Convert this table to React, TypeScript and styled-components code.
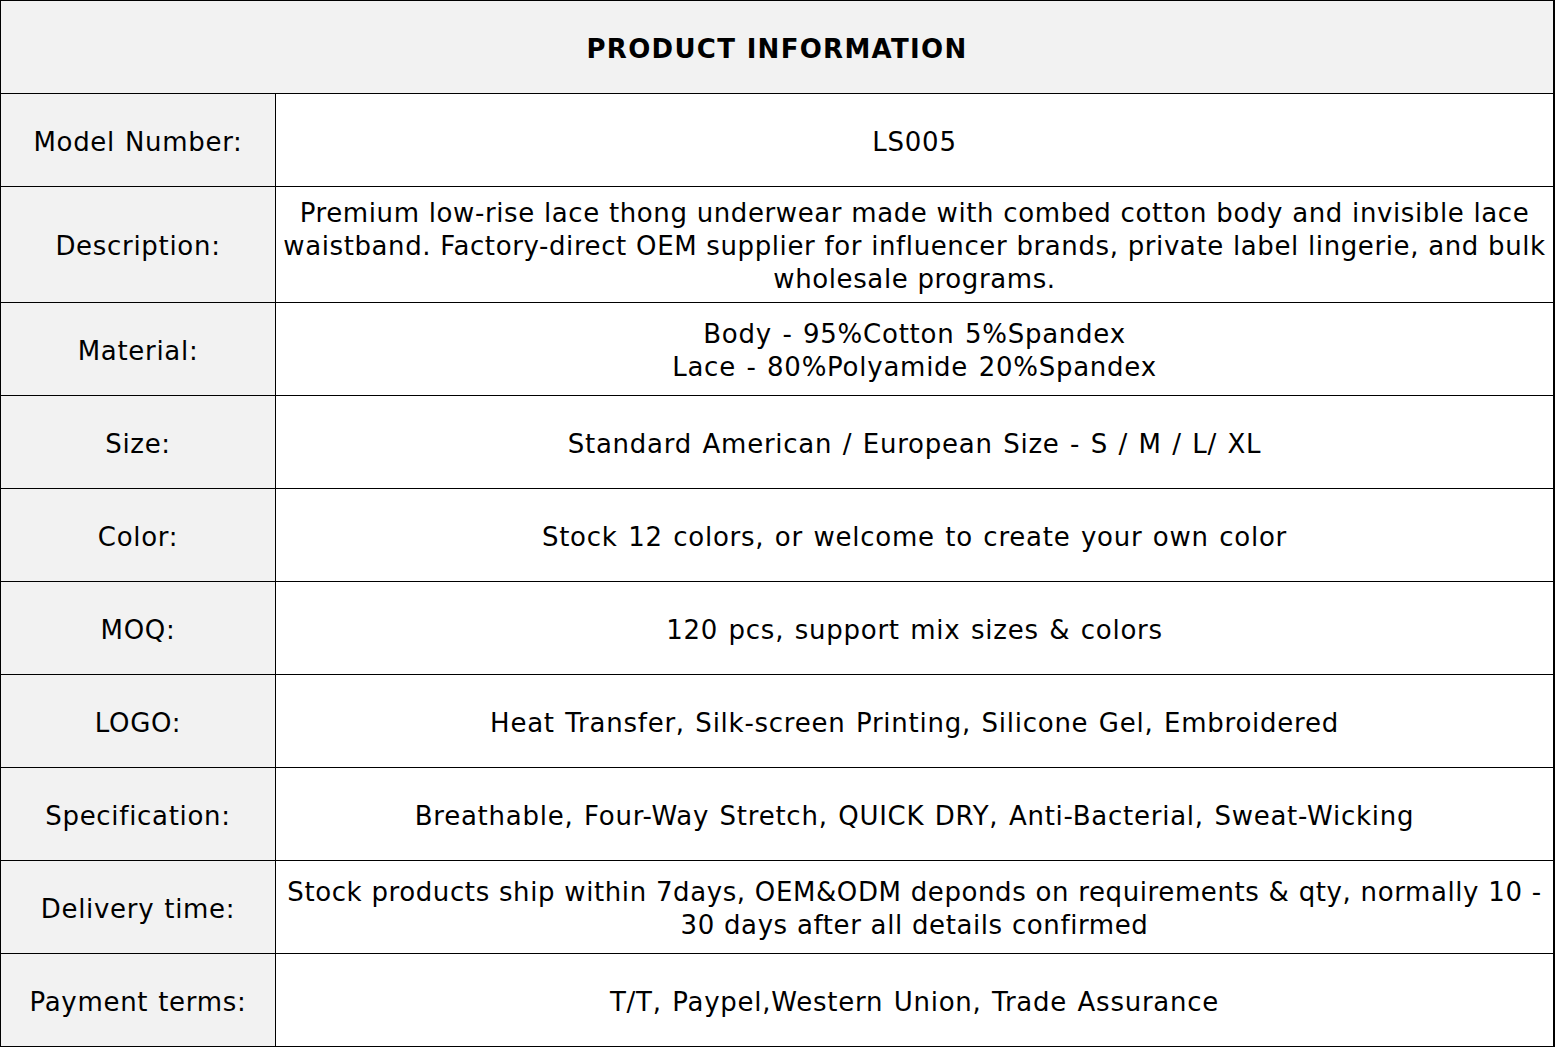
import React from 'react';
import styled, { createGlobalStyle } from 'styled-components';

const GlobalStyle = createGlobalStyle`
  html, body {
    margin: 0;
    padding: 0;
    background: #ffffff;
  }
  body {
    font-family: 'DejaVu Sans', Verdana, sans-serif;
    color: #000;
  }
`;

const Table = styled.table`
  width: 1555px;
  border-collapse: collapse;
  table-layout: fixed;
  font-family: 'DejaVu Sans', Verdana, sans-serif;
  font-size: 26px;
  line-height: 33px;
  letter-spacing: 0.7px;
  word-spacing: 1px;
`;

const Row = styled.tr<{ $h: number }>`
  height: ${(p) => p.$h}px;
`;

const HeadCell = styled.th`
  background: #f2f2f2;
  border: 1px solid #000;
  border-right-width: 2px;
  font-weight: bold;
  text-align: center;
  vertical-align: middle;
  letter-spacing: 1.3px;
  word-spacing: 0;
  padding: 5px 0 0;
`;

const Label = styled.td`
  background: #f2f2f2;
  border: 1px solid #000;
  text-align: center;
  vertical-align: middle;
  padding: 4px 2px 0;
  white-space: nowrap;
`;

const Value = styled.td<{ $tight?: boolean }>`
  background: #fff;
  border: 1px solid #000;
  border-right-width: 2px;
  text-align: center;
  vertical-align: middle;
  padding: 4px 1px 0;
  white-space: nowrap;
  letter-spacing: ${(p) => (p.$tight ? '0.6px' : '0.75px')};
  word-spacing: ${(p) => (p.$tight ? '0.3px' : '1.5px')};
`;

const rows: { label: string; value: string; h: number; tight?: boolean }[] = [
  { label: 'Model Number:', value: 'LS005', h: 93 },
  {
    label: 'Description:',
    value:
      'Premium low-rise lace thong underwear made with combed cotton body and invisible lace\nwaistband. Factory-direct OEM supplier for influencer brands, private label lingerie, and bulk\nwholesale programs.',
    h: 116,
    tight: true,
  },
  { label: 'Material:', value: 'Body - 95%Cotton 5%Spandex\nLace - 80%Polyamide 20%Spandex', h: 93 },
  { label: 'Size:', value: 'Standard American / European Size - S / M / L/ XL', h: 93 },
  { label: 'Color:', value: 'Stock 12 colors, or welcome to create your own color', h: 93 },
  { label: 'MOQ:', value: '120 pcs, support mix sizes & colors', h: 93 },
  { label: 'LOGO:', value: 'Heat Transfer, Silk-screen Printing, Silicone Gel, Embroidered', h: 93 },
  { label: 'Specification:', value: 'Breathable, Four-Way Stretch, QUICK DRY, Anti-Bacterial, Sweat-Wicking', h: 93 },
  {
    label: 'Delivery time:',
    value:
      'Stock products ship within 7days, OEM&ODM deponds on requirements & qty, normally 10 -\n30 days after all details confirmed',
    h: 93,
    tight: true,
  },
  { label: 'Payment terms:', value: 'T/T, Paypel,Western Union, Trade Assurance', h: 93 },
];

const App = () => {
  return (
    <>
      <GlobalStyle />
      <Table>
        <colgroup>
          <col style={{ width: 275 }} />
          <col />
        </colgroup>
        <tbody>
          <Row $h={93}>
            <HeadCell colSpan={2}>PRODUCT INFORMATION</HeadCell>
          </Row>
          {rows.map((r) => (
            <Row $h={r.h} key={r.label}>
              <Label>{r.label}</Label>
              <Value $tight={r.tight}>
                {r.value.split('\n').map((line, i) => (
                  <React.Fragment key={i}>
                    {i > 0 && <br />}
                    {line}
                  </React.Fragment>
                ))}
              </Value>
            </Row>
          ))}
        </tbody>
      </Table>
    </>
  );
};

export default App;
